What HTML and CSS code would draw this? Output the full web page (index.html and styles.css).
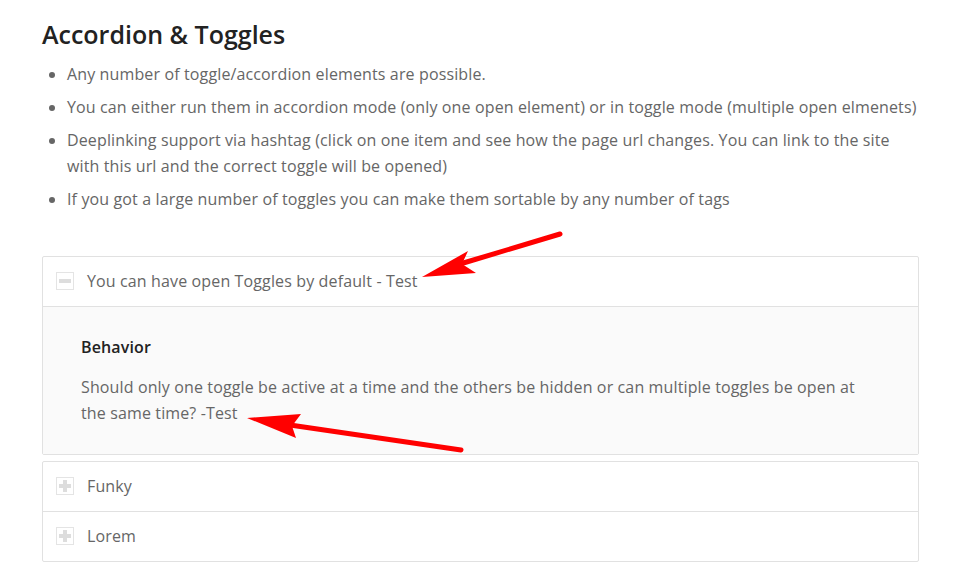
FILE: index.html
```html
<!DOCTYPE html>
<html lang="en">
  <head>
    <meta charset="UTF-8" />
    <meta name="viewport" content="width=device-width, initial-scale=1.0" />
    <title>Accordion &amp; Toggles</title>
    <link rel="stylesheet" href="styles.css">
  </head>
  <body>
    <div class="page">
      <h2 class="title">Accordion &amp; Toggles</h2>
      <ul class="features">
        <li>Any number of toggle/accordion elements are possible.</li>
        <li>You can either run them in accordion mode (only one open element) or in toggle mode (multiple open elmenets)</li>
        <li>Deeplinking support via hashtag (click on one item and see how the page url changes. You can link to the site with this url and the correct toggle will be opened)</li>
        <li>If you got a large number of toggles you can make them sortable by any number of tags</li>
      </ul>

      <div class="toggle-group">
        <div class="toggle open">
          <div class="toggle-head">
            <span class="toggle-icon"></span>
            <span>You can have open Toggles by default - Test</span>
          </div>
          <div class="toggle-body">
            <h4>Behavior</h4>
            <p>Should only one toggle be active at a time and the others be hidden or can multiple toggles be open at the same time? -Test</p>
          </div>
        </div>
      </div>

      <div class="toggle-group">
        <div class="toggle">
          <div class="toggle-head">
            <span class="toggle-icon"></span>
            <span>Funky</span>
          </div>
        </div>
        <div class="toggle">
          <div class="toggle-head">
            <span class="toggle-icon"></span>
            <span>Lorem</span>
          </div>
        </div>
      </div>
    </div>

    <svg class="arrows" width="958" height="586" viewBox="0 0 958 586">
      <line x1="560" y1="234" x2="460" y2="264" stroke="#f00" stroke-width="5" stroke-linecap="round" />
      <polygon points="422,277 468,251 462,264 476,273" fill="#f00" />
      <line x1="461" y1="450" x2="290" y2="425" stroke="#f00" stroke-width="5" stroke-linecap="round" />
      <polygon points="247,418 301,414 292,426 296,438" fill="#f00" />
    </svg>
  </body>
</html>
```

FILE: styles.css
```css
* {
  margin: 0;
  padding: 0;
  box-sizing: border-box;
}
body {
  font-family: "Open Sans", "Liberation Sans", sans-serif;
  font-size: 16px;
  line-height: 26px;
  letter-spacing: 0.13px;
  color: #666;
  background: #fff;
}
.page {
  width: 919px;
  padding: 14px 0 0 42px;
}
.title {
  font-size: 25px;
  line-height: 40px;
  font-weight: 600;
  letter-spacing: 0;
  color: #222;
  margin-bottom: 7px;
}
.features {
  padding-left: 25px;
  margin-bottom: 44px;
}
.features li {
  margin-bottom: 7px;
}
.toggle-group {
  border: 1px solid #e1e1e1;
  border-radius: 2px;
  margin-bottom: 6px;
}
.toggle + .toggle {
  border-top: 1px solid #e1e1e1;
}
.toggle-head {
  height: 49px;
  display: flex;
  align-items: center;
  padding: 0 0 1px 13px;
  gap: 13px;
}
.toggle-icon {
  position: relative;
  width: 18px;
  height: 18px;
  border: 1px solid #e4e4e4;
}
.toggle-icon::before,
.toggle-icon::after {
  content: "";
  position: absolute;
  background: #ddd;
}
.toggle-icon::before {
  left: 2px;
  right: 2px;
  top: 6px;
  height: 4px;
}
.toggle-icon::after {
  top: 2px;
  bottom: 2px;
  left: 6px;
  width: 4px;
}
.open .toggle-icon::after {
  display: none;
}
.toggle-body {
  border-top: 1px solid #e1e1e1;
  background: #fafafa;
  padding: 27px 38px 28px;
}
.toggle-body h4 {
  font-size: 16px;
  font-weight: 600;
  color: #222;
  margin-bottom: 14px;
}
.arrows {
  position: absolute;
  left: 0;
  top: 0;
  pointer-events: none;
}
```
